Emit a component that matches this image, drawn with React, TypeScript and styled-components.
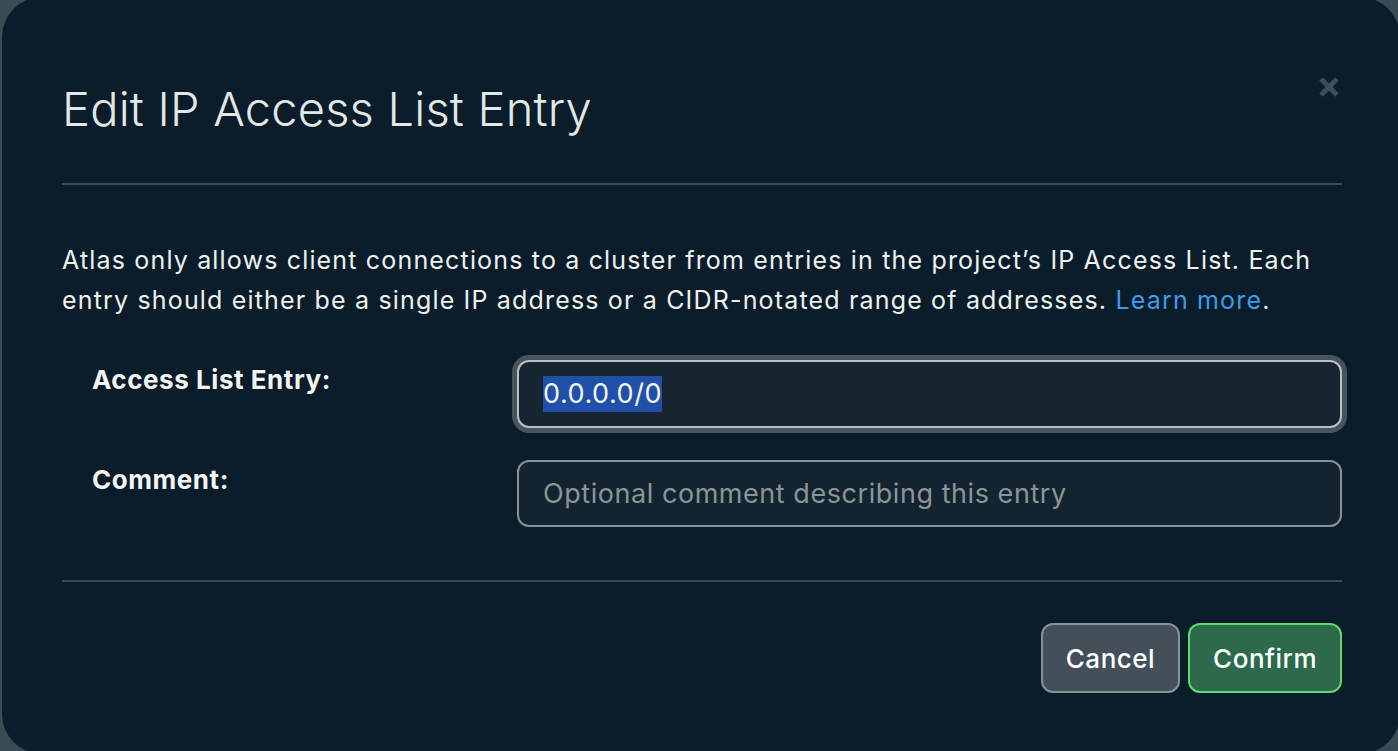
import React from "react";
import styled, { createGlobalStyle } from "styled-components";

const Global = createGlobalStyle`
  html, body { margin: 0; padding: 0; }
  body {
    background: #3a4b54;
    width: 1398px;
    height: 751px;
    overflow: hidden;
    font-family: Inter, "Noto Sans", sans-serif;
  }
  #root { width: 100%; height: 100%; }
`;

const Modal = styled.div`
  position: relative;
  box-sizing: border-box;
  margin-left: 2px;
  margin-top: -3px;
  width: 1398px;
  height: 757px;
  border-radius: 40px;
  background: #0b1d2a;
  padding: 84px 58px 0 60px;
  display: flex;
  flex-direction: column;
  color: #e8edeb;
`;

const Close = styled.button`
  position: absolute;
  top: 79px;
  right: 60px;
  width: 22px;
  height: 22px;
  padding: 0;
  border: 0;
  background: transparent;
  display: flex;
  align-items: center;
  justify-content: center;
`;

const Title = styled.h1`
  margin: 0;
  font-size: 47px;
  line-height: 56px;
  font-weight: 300;
  color: #e3e8e6;
  letter-spacing: 0.2px;
`;

const Divider = styled.hr<{ $top: number }>`
  margin: ${(p) => p.$top}px 0 0 0;
  border: 0;
  height: 2px;
  background: #3a4b54;
`;

const Para = styled.p`
  margin: 55px 0 0 0;
  font-size: 25px;
  line-height: 40px;
  font-weight: 400;
  letter-spacing: 1.17px;
  color: #eef1ef;
`;

const Link = styled.a`
  color: #3d9be9;
  text-decoration: none;
`;

const Form = styled.div`
  margin-top: 40px;
  display: flex;
  flex-direction: column;
  gap: 32px;
`;

const Row = styled.div`
  display: grid;
  grid-template-columns: 455px 1fr;
  align-items: start;
`;

const Label = styled.label`
  padding-left: 30px;
  padding-top: 5px;
  font-size: 26px;
  line-height: 30px;
  font-weight: 700;
  letter-spacing: 0.55px;
  color: #f2f4f3;
`;

const Input = styled.div<{ $focus?: boolean }>`
  box-sizing: border-box;
  height: ${(p) => (p.$focus ? 68 : 67)}px;
  border-radius: 12px;
  border: 2px solid ${(p) => (p.$focus ? "#b8c0c2" : "#889397")};
  background: ${(p) => (p.$focus ? "#172531" : "#132330")};
  box-shadow: ${(p) => (p.$focus ? "0 0 0 5px #46545d" : "none")};
  display: flex;
  align-items: center;
  padding-left: 24px;
  font-size: 27px;
  letter-spacing: 0.55px;
  color: #e8edeb;
`;

const Selected = styled.span`
  background: #2150a8;
  color: #f4f6f5;
  line-height: 36px;
`;

const Placeholder = styled.span`
  color: #8a9598;
`;

const Footer = styled.div`
  margin-top: 41px;
  display: flex;
  justify-content: flex-end;
  gap: 8px;
`;

const Button = styled.button<{ $primary?: boolean }>`
  box-sizing: border-box;
  height: 70px;
  padding: 0 23px;
  border-radius: 12px;
  border: 2px solid ${(p) => (p.$primary ? "#5ddb6d" : "#889397")};
  background: ${(p) => (p.$primary ? "#2d6a4b" : "#434f59")};
  color: #ffffff;
  font-family: Inter, "Noto Sans", sans-serif;
  font-size: 26px;
  letter-spacing: 0.5px;
  font-weight: 500;
`;

export default function App() {
  return (
    <>
      <Global />
      <Modal>
        <Close aria-label="Close">
          <svg width="22" height="22" viewBox="0 0 22 22">
            <path d="M3 3 L19 19 M19 3 L3 19" stroke="#3b4f59" strokeWidth="5" strokeLinecap="butt" />
          </svg>
        </Close>
        <Title>Edit IP Access List Entry</Title>
        <Divider $top={46} />
        <Para>
          Atlas only allows client connections to a cluster from entries in the project’s IP Access List. Each
          entry should either be a single IP address or a CIDR-notated range of addresses.{" "}
          <Link href="#">Learn more</Link>.
        </Para>
        <Form>
          <Row>
            <Label>Access List Entry:</Label>
            <Input $focus>
              <Selected>0.0.0.0/0</Selected>
            </Input>
          </Row>
          <Row>
            <Label>Comment:</Label>
            <Input>
              <Placeholder>Optional comment describing this entry</Placeholder>
            </Input>
          </Row>
        </Form>
        <Divider $top={53} />
        <Footer>
          <Button>Cancel</Button>
          <Button $primary>Confirm</Button>
        </Footer>
      </Modal>
    </>
  );
}
